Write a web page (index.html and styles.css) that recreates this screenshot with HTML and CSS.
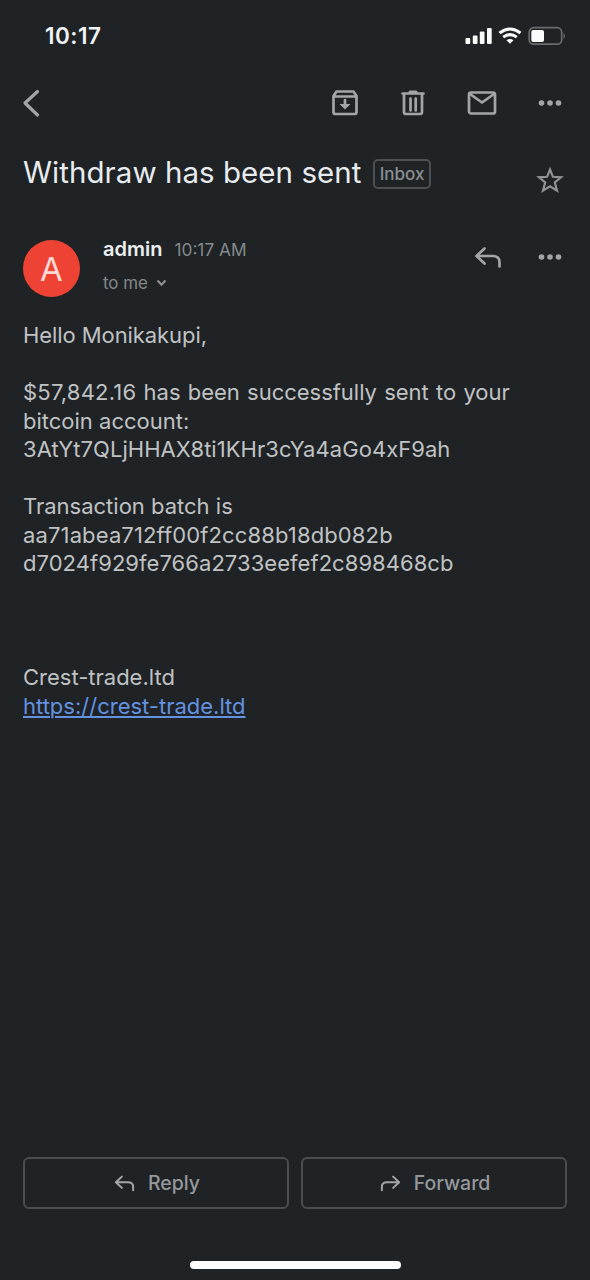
FILE: index.html
```html
<!DOCTYPE html>
<html lang="en">
<head>
<meta charset="utf-8">
<title>Withdraw has been sent</title>
<link rel="stylesheet" href="styles.css">
</head>
<body>
<svg width="0" height="0" class="defs">
  <symbol id="arrow" viewBox="0 0 28 24"><path d="M10.500 3.500 2.500 11l8 7.500M3.500 11H18.500q7 0 7 6V21.500"/></symbol>
</svg>
<div class="screen">
  <header class="status">
    <span class="clock">10:17</span>
    <svg class="status-icons" width="102" height="22" viewBox="0 0 102 22">
      <g fill="#fafcfc">
        <rect x="1.500" y="13" width="4.700" height="6" rx="1"/><rect x="8.800" y="10.500" width="4.700" height="8.500" rx="1"/><rect x="15.800" y="6.500" width="4.700" height="12.500" rx="1"/><rect x="23" y="3" width="4.700" height="16" rx="1"/>
        <path d="M46 18.700l-3.500-3.400q3.500-2.800 7 0z"/>
      </g>
      <g fill="none" stroke="#fafcfc" stroke-width="3"><path d="M35.500 8q10.500-8 21 0"/><path d="M39.200 12.100q6.800-5 13.600 0"/></g>
      <rect x="65.200" y="2.700" width="32.500" height="16.500" rx="4.500" fill="none" stroke="#6a6d6f" stroke-width="1.700"/>
      <rect x="67.300" y="5" width="12.700" height="12" rx="2" fill="#fafcfc"/>
      <path d="M99.700 8q3 3-.2 6z" fill="#6a6d6f"/>
    </svg>
  </header>

  <nav class="toolbar">
    <svg class="line back" width="20" height="30" viewBox="0 0 20 30"><path d="M17.500 3.500 5 15 17.500 27"/></svg>
    <div class="tools">
      <svg class="line" width="28" height="28" viewBox="0 0 28 28"><path d="M2.500 7v16q0 2 2 2h19q2 0 2-2V7L22.500 2.500h-17zM3 7.500h22"/><path d="M14 11v6"/><path class="solid" d="M8.500 15h11L14 20.500z"/></svg>
      <svg class="line" width="28" height="28" viewBox="0 0 28 28"><path d="M3.500 4.500h21M5 5v18q0 2 2 2h14q2 0 2-2V5M11.500 9.500v12M16.700 9.500v12"/><path class="solid" d="M9.500 4V3q0-1.500 1.500-1.500h6q1.500 0 1.500 1.500v1z"/></svg>
      <svg class="line" width="30" height="26" viewBox="0 0 30 26"><rect x="2" y="2.500" width="26" height="21" rx="2"/><path d="M3 4 15 12.500 27 4"/></svg>
      <svg class="dots" width="24" height="8" viewBox="0 0 24 8"><circle cx="3.500" cy="4" r="2.800"/><circle cx="12" cy="4" r="2.800"/><circle cx="20.500" cy="4" r="2.800"/></svg>
    </div>
  </nav>

  <section class="subject">
    <h1>Withdraw has been sent</h1>
    <span class="label">Inbox</span>
    <svg class="star" width="28" height="28" viewBox="0 0 28 28"><path d="M14 3.500 16.900 10.800 25 11.300 18.800 16.400 21 24.600 14 20.200 7 24.600 9.200 16.400 3 11.300 11.100 10.800z"/></svg>
  </section>

  <section class="sender">
    <div class="avatar">A</div>
    <div class="who">
      <div class="from"><b>admin</b><time>10:17 AM</time></div>
      <div class="to">to me <svg width="11" height="8" viewBox="0 0 11 8"><path d="M1.500 1.500 5.500 5.800 9.500 1.500"/></svg></div>
    </div>
    <div class="actions">
      <svg class="line" width="28" height="24"><use href="#arrow"/></svg>
      <svg class="dots" width="24" height="8" viewBox="0 0 24 8"><circle cx="3.500" cy="4" r="2.800"/><circle cx="12" cy="4" r="2.800"/><circle cx="20.500" cy="4" r="2.800"/></svg>
    </div>
  </section>

  <main class="message">
    <p><span class="greeting">Hello Monikakupi,</span></p>
    <p><span class="amount"><span class="sum">$57,842.16</span> has been successfully sent to your</span><br>bitcoin account:<br><span class="code">3AtYt7QLjHHAX8ti1KHr3cYa4aGo4xF9ah</span></p>
    <p>Transaction batch is<br><span class="batch">aa71abea712ff00f2cc88b18db082b</span><br><span class="code">d7024f929fe766a2733eefef2c898468cb</span></p>
    <p class="signature">Crest-trade.ltd<br><a href="#">https://crest-trade.ltd</a></p>
  </main>

  <footer class="replies">
    <button type="button"><svg class="line" width="21" height="18"><use href="#arrow"/></svg><span>Reply</span></button>
    <button type="button"><svg class="line flip" width="21" height="18"><use href="#arrow"/></svg><span>Forward</span></button>
  </footer>
  <div class="home"></div>
</div>
</body>
</html>
```
FILE: styles.css
```css
* { box-sizing: border-box; }
body { margin: 0; background: #1f2326; font-family: Inter, "Liberation Sans", sans-serif; }
svg { display: block; flex: none; }
.defs { position: absolute; }
.screen { width: 590px; height: 1280px; display: flex; flex-direction: column; overflow: hidden; }
.line { fill: none; stroke: #a3a6a8; stroke-width: 2.7; stroke-linecap: round; stroke-linejoin: round; }
.back { stroke-width: 3.200; }
.solid { fill: #a3a6a8; stroke: none; }
.dots { fill: #a3a6a8; }

.status { height: 72px; padding: 0 24px 0 45px; display: flex; align-items: center; justify-content: space-between; }
.clock { margin-top: -2px; font-size: 22.500px; font-weight: 600; color: #f0f2f3; letter-spacing: 0.5px; }

.toolbar { height: 62px; padding: 0 28px 0 20px; display: flex; align-items: center; justify-content: space-between; }
.tools { display: flex; align-items: center; gap: 40px; }
.tools .dots { margin-left: 1px; }

.subject { height: 90px; padding: 18px 26px 0 23px; display: flex; align-items: flex-start; }
h1 { margin: 0; width: 339px; font-size: 29.500px; line-height: 40px; font-weight: 400; color: #e9ecee; white-space: nowrap; letter-spacing: 0.05px; }
.label { margin: 7px 0 0 11px; width: 58px; height: 30px; border: 2px solid #4c5053; border-radius: 5px; font-size: 17px; line-height: 26px; font-weight: 500; color: #8b8f91; text-align: center; }
.star { margin: 14px 0 0 auto; fill: none; stroke: #8f9395; stroke-width: 2.200; }

.sender { height: 96px; padding: 16px 28px 0 23px; display: flex; align-items: flex-start; }
.avatar { width: 57px; height: 57px; border-radius: 50%; background: #ee4334; color: #fbd9d5; font-size: 33px; line-height: 58px; text-align: center; }
.who { margin-left: 23px; margin-top: -3px; }
.from { display: flex; align-items: baseline; gap: 12px; line-height: 24px; }
.from b { font-size: 20px; font-weight: 600; color: #eceeef; }
.from time { font-size: 17.300px; color: #85898b; }
.to { margin-top: 9px; display: flex; align-items: center; gap: 8px; font-size: 16.900px; line-height: 24px; color: #85898b; }
.to svg { fill: none; stroke: #8f9395; stroke-width: 2; }
.actions { margin-left: auto; padding-top: 5px; display: flex; align-items: center; gap: 36px; }

.message { flex: 1; padding: 1px 23px 0; font-size: 22px; line-height: 28.550px; color: #c0c2c3; white-space: nowrap; }
.message p { margin: 0 0 28.550px; }
.message .signature { padding-top: 57px; }
.message a { color: #6492e0; text-decoration-thickness: 1.500px; text-underline-offset: 2px; }
.greeting { letter-spacing: -0.08px; }
.amount { letter-spacing: -0.02px; word-spacing: 1.100px; }
.sum { letter-spacing: 0.2px; }
.code { letter-spacing: 0.05px; }
.batch { letter-spacing: 0.13px; }

.replies { padding: 0 23px; display: flex; gap: 12px; }
.replies button { flex: 1; height: 52px; padding: 0; border: 2px solid #4a4e51; border-radius: 6px; background: none; display: flex; align-items: center; justify-content: center; gap: 13px; font: 500 19.500px Inter, sans-serif; color: #96999b; }
.replies .line { margin-left: 2px; }
.flip { transform: scaleX(-1); }
.home { width: 211px; height: 8px; margin: 52px auto 11px; border-radius: 4px; background: #fcfefe; }
```
